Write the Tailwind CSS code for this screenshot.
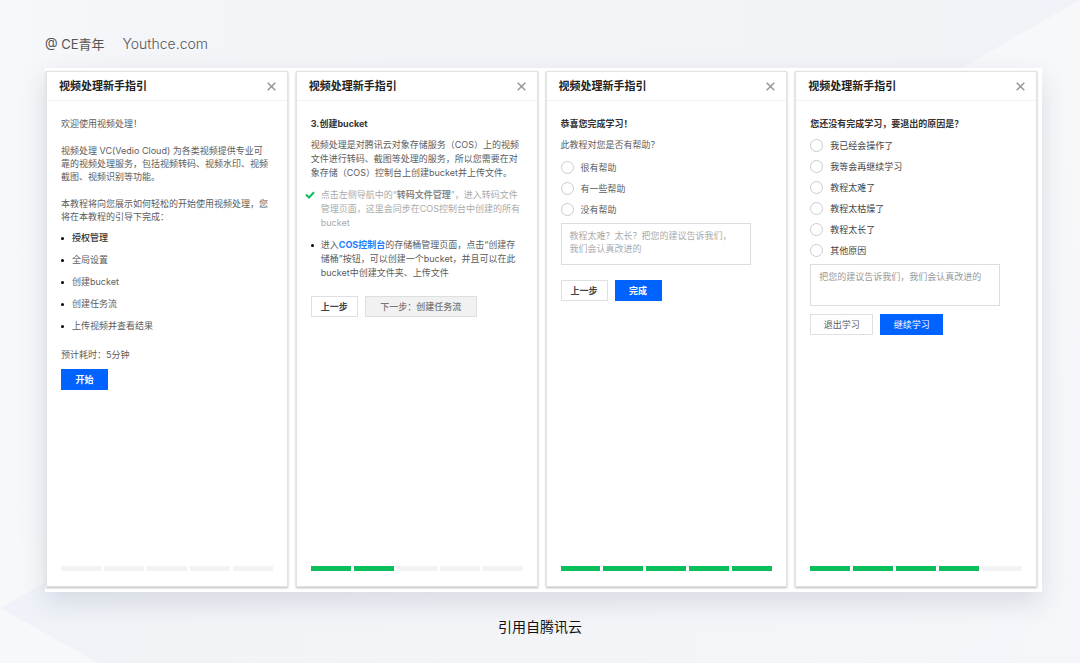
<!DOCTYPE html>
<html lang="zh-CN">
<head>
<meta charset="utf-8">
<meta name="viewport" content="width=device-width, initial-scale=1">
<title>视频处理新手指引</title>
<script src="https://cdn.jsdelivr.net/npm/@tailwindcss/browser@4"></script>
</head>
<body class="relative isolate flex min-h-screen flex-col bg-[#f5f6f9] font-['Inter','Noto_Sans_CJK_SC',sans-serif] text-[9px] leading-[14px] text-[#5c5c5c]">
  <!-- Backdrop of pale diagonal bands -->
  <svg class="absolute inset-0 -z-10 h-full w-full" viewBox="0 0 1080 663" preserveAspectRatio="none" aria-hidden="true">
    <defs>
      <linearGradient id="base" x1="0" x2="1" y1="0" y2="0"><stop offset="0" stop-color="#f7f8fa"/><stop offset=".12" stop-color="#f4f5f8"/><stop offset="1" stop-color="#f5f6f9"/></linearGradient>
      <linearGradient id="low" x1="0" x2="1" y1="0" y2="0"><stop offset="0" stop-color="#eff3f9"/><stop offset=".11" stop-color="#f0f3f7"/><stop offset=".14" stop-color="#f2f3f7"/><stop offset="1" stop-color="#f5f6f9"/></linearGradient>
      <linearGradient id="high" x1="0" x2="1" y1="0" y2="0"><stop offset="0" stop-color="#f4f5f8"/><stop offset=".86" stop-color="#f1f3f7"/><stop offset="1" stop-color="#eff3f9"/></linearGradient>
      <linearGradient id="side" x1="0" x2="0" y1="0" y2="1"><stop offset="0" stop-color="#f7f8fa"/><stop offset="1" stop-color="#f5f6f9"/></linearGradient>
    </defs>
    <path fill="url(#base)" d="M0 0h1080v663H0z"/>
    <path fill="url(#high)" d="M130 0H1080L962 68 500 330z"/>
    <path fill="#f7f8fa" d="M0 540h120v123H0z"/>
    <path fill="url(#low)" d="M0 608L120 540H1080V663H98z"/>
    <path fill="url(#side)" d="M1080 0v663h-60V68h-58z"/>
    <path fill="#f3f5fa" d="M1018 620l-66 43h44l24-43z"/>
  </svg>

  <header class="flex h-[68px] items-center gap-[18px] pt-5 text-[13px] leading-5 text-[#555] pl-[45px]">
    <span>@ CE青年</span><span class="text-[14px] font-light">Youthce.com</span>
  </header>

  <main class="mr-[38px] ml-[45px] grid flex-1 grid-cols-4 gap-2 bg-white pt-[3px] pr-[5px] pb-[5px] pl-px shadow-[0_10px_24px_rgba(40,50,90,0.13)]">

    <section class="flex flex-col border border-[#e2e2e2] bg-white shadow-[0_1px_2px_rgba(0,0,0,0.28)]">
      <div class="flex h-[29px] items-center justify-between border-b border-[#f3f3f3] pr-[11px] pl-3">
        <h2 class="text-[11px] font-bold text-[#222]">视频处理新手指引</h2>
        <button type="button" aria-label="关闭"><svg class="h-[9px] w-[9px]" viewBox="0 0 9 9" fill="none" stroke="#999" stroke-width="1.6"><path d="M.7.7l7.6 7.6M8.3.7L.7 8.3"/></svg></button>
      </div>
      <div class="flex-1 pt-4 pr-2 pl-[14px]">
        <p>欢迎使用视频处理！</p>
        <p class="mt-[13px] leading-[13px]">视频处理 VC(Vedio Cloud) 为各类视频提供专业可<br>靠的视频处理服务，包括视频转码、视频水印、视频<br>截图、视频识别等功能。</p>
        <p class="mt-[14px] leading-[13px]">本教程将向您展示如何轻松的开始使用视频处理，您<br>将在本教程的引导下完成：</p>
        <ul class="mt-1 leading-[22px]">
          <li class="flex items-center gap-2 font-medium text-[#333]"><i class="h-[3px] w-[3px] rounded-full bg-black"></i>授权管理</li>
          <li class="flex items-center gap-2"><i class="h-[3px] w-[3px] rounded-full bg-black"></i>全局设置</li>
          <li class="flex items-center gap-2"><i class="h-[3px] w-[3px] rounded-full bg-black"></i>创建bucket</li>
          <li class="flex items-center gap-2"><i class="h-[3px] w-[3px] rounded-full bg-black"></i>创建任务流</li>
          <li class="flex items-center gap-2"><i class="h-[3px] w-[3px] rounded-full bg-black"></i>上传视频并查看结果</li>
        </ul>
        <p class="mt-[11px]">预计耗时：5分钟</p>
        <button type="button" class="mt-[7px] block h-[21px] w-[47px] bg-[#0062ff] font-bold text-white">开始</button>
      </div>
      <div class="mb-[15px] grid grid-cols-5 gap-[3px] pr-[14px] pl-[14px]" role="progressbar" aria-label="进度" aria-valuemin="0" aria-valuemax="5" aria-valuenow="0">
        <i class="h-[5px] bg-[#f3f3f3]"></i><i class="h-[5px] bg-[#f3f3f3]"></i><i class="h-[5px] bg-[#f3f3f3]"></i><i class="h-[5px] bg-[#f3f3f3]"></i><i class="h-[5px] bg-[#f3f3f3]"></i>
      </div>
    </section>

    <section class="flex flex-col border border-[#e2e2e2] bg-white shadow-[0_1px_2px_rgba(0,0,0,0.28)]">
      <div class="flex h-[29px] items-center justify-between border-b border-[#f3f3f3] pr-[11px] pl-3">
        <h2 class="text-[11px] font-bold text-[#222]">视频处理新手指引</h2>
        <button type="button" aria-label="关闭"><svg class="h-[9px] w-[9px]" viewBox="0 0 9 9" fill="none" stroke="#999" stroke-width="1.6"><path d="M.7.7l7.6 7.6M8.3.7L.7 8.3"/></svg></button>
      </div>
      <div class="flex-1 pt-4 pr-2 pl-[14px]">
        <h3 class="font-bold text-[#333]">3.创建bucket</h3>
        <p class="mt-[7px]">视频处理是对腾讯云对象存储服务（COS）上的视频<br>文件进行转码、截图等处理的服务，所以您需要在对<br>象存储（COS）控制台上创建bucket并上传文件。</p>
        <ul>
          <li class="mt-2 -ml-[6px] flex gap-[6px] text-[#aaa]">
            <svg class="mt-[3px] h-2 w-[10px] shrink-0" viewBox="0 0 10 8" fill="none" stroke="#0abf5b" stroke-width="2"><path d="M1 3.5l3 3L9 1.2"/></svg>
            <p>点击左侧导航中的“<b class="font-bold text-[#888]">转码文件管理</b>”，进入转码文件<br>管理页面，这里会同步在COS控制台中创建的所有<br>bucket</p>
          </li>
          <li class="mt-2 flex gap-[7px]">
            <i class="mt-[6px] h-[3px] w-[3px] shrink-0 rounded-full bg-black"></i>
            <p>进入<a href="#" class="font-bold text-[#1a7dff]">COS控制台</a>的存储桶管理页面，点击“创建存<br>储桶”按钮，可以创建一个bucket，并且可以在此<br>bucket中创建文件夹、上传文件</p>
          </li>
        </ul>
        <div class="mt-4 flex gap-[7px]">
          <button type="button" class="h-[21px] w-[47px] border border-[#e0e0e0] font-bold text-[#444]">上一步</button>
          <button type="button" disabled class="h-[21px] w-28 border border-[#dedede] bg-[#f1f1f1] font-medium text-[#777]">下一步：创建任务流</button>
        </div>
      </div>
      <div class="mb-[15px] grid grid-cols-5 gap-[3px] pr-[14px] pl-[14px]" role="progressbar" aria-label="进度" aria-valuemin="0" aria-valuemax="5" aria-valuenow="2">
        <i class="h-[5px] bg-[#0abf5b]"></i><i class="h-[5px] bg-[#0abf5b]"></i><i class="h-[5px] bg-[#f3f3f3]"></i><i class="h-[5px] bg-[#f3f3f3]"></i><i class="h-[5px] bg-[#f3f3f3]"></i>
      </div>
    </section>

    <section class="flex flex-col border border-[#e2e2e2] bg-white shadow-[0_1px_2px_rgba(0,0,0,0.28)]">
      <div class="flex h-[29px] items-center justify-between border-b border-[#f3f3f3] pr-[11px] pl-3">
        <h2 class="text-[11px] font-bold text-[#222]">视频处理新手指引</h2>
        <button type="button" aria-label="关闭"><svg class="h-[9px] w-[9px]" viewBox="0 0 9 9" fill="none" stroke="#999" stroke-width="1.6"><path d="M.7.7l7.6 7.6M8.3.7L.7 8.3"/></svg></button>
      </div>
      <form class="flex-1 pt-4 pr-2 pl-[14px]">
        <h3 class="font-bold text-[#333]">恭喜您完成学习！</h3>
        <fieldset>
          <legend class="pt-[7px]">此教程对您是否有帮助？</legend>
          <div class="mt-[5px]">
            <label class="flex h-[21px] items-center gap-[7px]"><input type="radio" name="helpful" class="h-[13px] w-[13px] appearance-none rounded-full border border-[#ccc] checked:border-4 checked:border-[#0062ff]">很有帮助</label>
            <label class="flex h-[21px] items-center gap-[7px]"><input type="radio" name="helpful" class="h-[13px] w-[13px] appearance-none rounded-full border border-[#ccc] checked:border-4 checked:border-[#0062ff]">有一些帮助</label>
            <label class="flex h-[21px] items-center gap-[7px]"><input type="radio" name="helpful" class="h-[13px] w-[13px] appearance-none rounded-full border border-[#ccc] checked:border-4 checked:border-[#0062ff]">没有帮助</label>
          </div>
        </fieldset>
        <textarea aria-label="建议" class="mt-[3px] block h-[42px] w-[190px] resize-none border border-[#ddd] px-2 py-[5px] leading-[13px] placeholder:text-[#aaa]" placeholder="教程太难？太长？把您的建议告诉我们，&#10;我们会认真改进的"></textarea>
        <div class="mt-[15px] flex gap-[7px]">
          <button type="button" class="h-[21px] w-[47px] border border-[#e0e0e0] font-bold text-[#444]">上一步</button>
          <button type="button" class="h-[21px] w-[47px] bg-[#0062ff] font-bold text-white">完成</button>
        </div>
      </form>
      <div class="mb-[15px] grid grid-cols-5 gap-[3px] pr-[14px] pl-[14px]" role="progressbar" aria-label="进度" aria-valuemin="0" aria-valuemax="5" aria-valuenow="5">
        <i class="h-[5px] bg-[#0abf5b]"></i><i class="h-[5px] bg-[#0abf5b]"></i><i class="h-[5px] bg-[#0abf5b]"></i><i class="h-[5px] bg-[#0abf5b]"></i><i class="h-[5px] bg-[#0abf5b]"></i>
      </div>
    </section>

    <section class="flex flex-col border border-[#e2e2e2] bg-white shadow-[0_1px_2px_rgba(0,0,0,0.28)]">
      <div class="flex h-[29px] items-center justify-between border-b border-[#f3f3f3] pr-[11px] pl-3">
        <h2 class="text-[11px] font-bold text-[#222]">视频处理新手指引</h2>
        <button type="button" aria-label="关闭"><svg class="h-[9px] w-[9px]" viewBox="0 0 9 9" fill="none" stroke="#999" stroke-width="1.6"><path d="M.7.7l7.6 7.6M8.3.7L.7 8.3"/></svg></button>
      </div>
      <form class="flex-1 pt-4 pr-2 pl-[14px]">
        <fieldset>
          <legend class="font-bold text-[#333]">您还没有完成学习，要退出的原因是？</legend>
          <div class="mt-1 text-[#444]">
            <label class="flex h-[21px] items-center gap-[7px]"><input type="radio" name="reason" class="h-[13px] w-[13px] appearance-none rounded-full border border-[#ccc] checked:border-4 checked:border-[#0062ff]">我已经会操作了</label>
            <label class="flex h-[21px] items-center gap-[7px]"><input type="radio" name="reason" class="h-[13px] w-[13px] appearance-none rounded-full border border-[#ccc] checked:border-4 checked:border-[#0062ff]">我等会再继续学习</label>
            <label class="flex h-[21px] items-center gap-[7px]"><input type="radio" name="reason" class="h-[13px] w-[13px] appearance-none rounded-full border border-[#ccc] checked:border-4 checked:border-[#0062ff]">教程太难了</label>
            <label class="flex h-[21px] items-center gap-[7px]"><input type="radio" name="reason" class="h-[13px] w-[13px] appearance-none rounded-full border border-[#ccc] checked:border-4 checked:border-[#0062ff]">教程太枯燥了</label>
            <label class="flex h-[21px] items-center gap-[7px]"><input type="radio" name="reason" class="h-[13px] w-[13px] appearance-none rounded-full border border-[#ccc] checked:border-4 checked:border-[#0062ff]">教程太长了</label>
            <label class="flex h-[21px] items-center gap-[7px]"><input type="radio" name="reason" class="h-[13px] w-[13px] appearance-none rounded-full border border-[#ccc] checked:border-4 checked:border-[#0062ff]">其他原因</label>
          </div>
        </fieldset>
        <textarea aria-label="建议" class="mt-[3px] block h-[42px] w-[190px] resize-none border border-[#ddd] px-2 py-[5px] leading-[13px] placeholder:text-[#999]" placeholder="把您的建议告诉我们，我们会认真改进的"></textarea>
        <div class="mt-2 flex gap-[7px]">
          <button type="button" class="h-[21px] w-[63px] border border-[#e0e0e0]">退出学习</button>
          <button type="button" class="h-[21px] w-[63px] bg-[#0062ff] text-white">继续学习</button>
        </div>
      </form>
      <div class="mb-[15px] grid grid-cols-5 gap-[3px] pr-[14px] pl-[14px]" role="progressbar" aria-label="进度" aria-valuemin="0" aria-valuemax="5" aria-valuenow="4">
        <i class="h-[5px] bg-[#0abf5b]"></i><i class="h-[5px] bg-[#0abf5b]"></i><i class="h-[5px] bg-[#0abf5b]"></i><i class="h-[5px] bg-[#0abf5b]"></i><i class="h-[5px] bg-[#f3f3f3]"></i>
      </div>
    </section>
  </main>

  <footer class="flex h-[71px] items-center justify-center pb-[2px] text-[14px] leading-5 text-[#111]">引用自腾讯云</footer>
</body>
</html>
